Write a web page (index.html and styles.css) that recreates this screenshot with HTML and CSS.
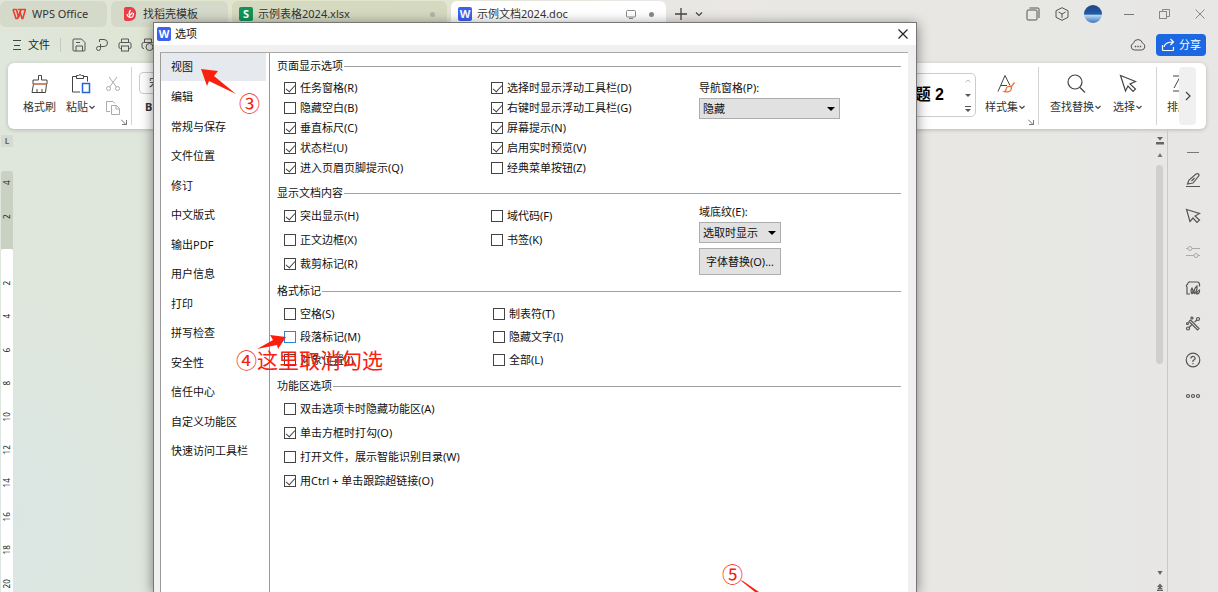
FILE: index.html
```html
<!DOCTYPE html>
<html lang="zh-CN">
<head>
<meta charset="utf-8">
<title>示例文档2024.doc - WPS Office</title>
<link rel="stylesheet" href="styles.css">
</head>
<body>
<div class="app">
  <header class="tabbar">
    <button class="tab tab-home"><svg class="i14" viewBox="0 0 14 14" fill="none" stroke-linejoin="round"><path d="M1 2.500h3.500l2 8L9 2.500" stroke="#e8402f" stroke-width="1.600"/><path d="M1 2.500l3 9h1.500L8 5l2 6.500h.8l2.600-9H6" stroke="#e8402f" stroke-width="1.600"/></svg>WPS Office</button>
    <button class="tab tab-docer"><svg class="i14" viewBox="0 0 14 14"><path d="M1 2Q1 0 3 0h5a6 6 0 0 1 5 7q0 7-7 7H3q-2 0-2-2z" fill="#ea3d45"/><path d="M4 7q.5 3.500 3.500 3.500T10.500 6M7 10q-2-4 .5-7M7 8l2.500-2.500" fill="none" stroke="#fff" stroke-width="1.200"/></svg>找稻壳模板</button>
    <button class="tab tab-sheet"><span class="badge badge-green">S</span>示例表格2024.xlsx<span class="tab-end"><i class="dot dot-light"></i></span></button>
    <button class="tab tab-doc"><span class="badge">W</span>示例文档2024.doc<span class="tab-end"><svg class="i12" viewBox="0 0 12 12" fill="none" stroke="#888"><rect x="1.500" y="2.500" width="9" height="6.500" rx="1"/><path d="M4 10.500h4"/></svg><i class="dot"></i></span></button>
    <button class="icon-btn plus" aria-label="新建"><svg class="i14" viewBox="0 0 14 14" stroke="#444" stroke-width="1.300"><path d="M1 7h12M7 1v12"/></svg></button>
    <button class="icon-btn" aria-label="标签列表"><svg class="i8" viewBox="0 0 8 8" fill="none" stroke="#444" stroke-width="1.200"><path d="M1 2.500l3 3 3-3"/></svg></button>
    <div class="window-tools">
      <button class="icon-btn" aria-label="窗口"><svg class="i14" viewBox="0 0 14 14" fill="none" stroke="#555"><rect x="1" y="3" width="10" height="10" rx="1"/><path d="M3.500 1H12q1 0 1 1v9"/></svg></button>
      <button class="icon-btn" aria-label="应用"><svg class="i14" viewBox="0 0 14 14" fill="none" stroke="#555"><path d="M7 .7l6 3v6.600l-6 3-6-3V3.700zM3.500 5L7 7l3.500-2M7 7v4"/></svg></button>
      <span class="avatar"></span>
      <button class="icon-btn minimize" aria-label="最小化"><svg class="i12" viewBox="0 0 12 12" stroke="#777"><path d="M1 6.500h10"/></svg></button>
      <button class="icon-btn" aria-label="还原"><svg class="i12" viewBox="0 0 12 12" fill="none" stroke="#888"><rect x=".5" y="3.500" width="7" height="7"/><path d="M3.500 3.500v-2h7v7h-3"/></svg></button>
      <button class="icon-btn" aria-label="关闭"><svg class="i12" viewBox="0 0 12 12" stroke="#888"><path d="M1.500 1.500l9 9M10.500 1.500l-9 9"/></svg></button>
    </div>
  </header>

  <div class="menubar">
    <button class="file-menu"><svg class="i10" viewBox="0 0 10 10" stroke="#444"><path d="M1 .5h8M2 5.500h6M1 9.500h8"/></svg>文件</button>
    <i class="rule"></i>
    <button class="icon-btn" aria-label="保存"><svg class="i14" viewBox="0 0 14 14" fill="none" stroke="#555"><path d="M1 2q0-1 1-1h7.500L13 4.500V12q0 1-1 1H2q-1 0-1-1zM4 13V8h6.500v5M4 4.500h4"/></svg></button>
    <button class="icon-btn" aria-label="输出"><svg class="i14" viewBox="0 0 14 14" fill="none" stroke="#555"><path d="M4.500 4V1.500H9a3.500 3.500 0 0 1 0 7H3.500a2 2 0 1 0 2 2V6"/></svg></button>
    <button class="icon-btn" aria-label="打印"><svg class="i14" viewBox="0 0 14 14" fill="none" stroke="#555"><path d="M3.500 4V1h7v3M3.500 10.500h-1Q1 10.500 1 9V6q0-1.500 1.500-1.500h9Q13 4.500 13 6v3q0 1.500-1.500 1.500h-1"/><rect x="3.500" y="8" width="7" height="5"/></svg></button>
    <button class="icon-btn" aria-label="打印预览"><svg class="i14" viewBox="0 0 14 14" fill="none" stroke="#555"><path d="M3.500 4V1h7v3M3 10.500Q1 10.500 1 9V6q0-1.500 1.500-1.500h9Q13 4.500 13 6"/><circle cx="8.500" cy="9" r="3.500"/></svg></button>
    <div class="menubar-end">
      <svg class="i16" viewBox="0 0 16 16" fill="none" stroke="#555"><path d="M4.500 13a3.500 3.500 0 0 1-1-6.800 4.600 4.600 0 0 1 9 0 3.500 3.500 0 0 1-1 6.800z"/><path d="M4.800 9.500h1.400M7.300 9.500h1.400M9.800 9.500h1.400" stroke-width="1.500"/></svg>
      <button class="share"><svg class="i14" viewBox="0 0 14 14" fill="none" stroke="#fff" stroke-width="1.200"><path d="M1.500 7v4.500q0 1 1 1h9q1 0 1-1V9M3 9q1-5 9-5M9.500 1l3 3-3 3"/></svg>分享</button>
    </div>
  </div>

  <div class="ribbon">
    <button class="tool tool-brush"><svg class="i22" viewBox="0 0 22 22" fill="none" stroke="#444"><path d="M9.500 7V2.500h3V7h5.500v4H4V7zM4.500 11L3 19.500h13.500L17.500 11M8 19.500V16M13 19.500V16"/><path d="M4 11h14" stroke="#e8743b"/></svg>格式刷</button>
    <button class="tool"><svg class="i22" viewBox="0 0 22 22" fill="none" stroke="#444"><path d="M6 3.500H2.500v15.500H10M14 3.500h3.500v5M6.500 5.500v-3h2q1.500-2 3 0h2v3z"/><path d="M12.500 10.500h7v9h-7z" stroke="#2763d8" stroke-width="1.500"/></svg><span>粘贴<svg class="caret" viewBox="0 0 8 8"><path d="M1.500 3L4 5.500 6.500 3"/></svg></span></button>
    <div class="small-tools">
      <button class="icon-btn" aria-label="剪切"><svg class="i16" viewBox="0 0 16 16" fill="none" stroke="#aaa"><circle cx="3.500" cy="12.500" r="2"/><circle cx="12.500" cy="12.500" r="2"/><path d="M4.500 11L12 1M11.500 11L4 1"/></svg></button>
      <button class="icon-btn" aria-label="复制"><svg class="i16" viewBox="0 0 16 16" fill="none" stroke="#aaa"><path d="M5 11.500H1.500V1.500H8l2 2"/><path d="M6.500 5.500h5l3 3v6h-8zM11 5.500V9h3.500"/></svg></button>
    </div>
    <i class="corner"><svg class="i6" viewBox="0 0 6 6" fill="none" stroke="#777"><path d="M0 .5l5 5M5.500 1v4.500H1"/></svg></i>
    <i class="rule"></i>
    <div class="font-group"><span class="font-name">宋体</span><button class="bold">B</button></div>
    <div class="gallery"><span class="gallery-item">标题 2</span><span class="spins"><svg viewBox="0 0 8 8" fill="none" stroke="#bbb"><path d="M1.500 5L4 3l2.500 2"/></svg><svg viewBox="0 0 8 8" fill="#555"><path d="M1 3h6L4 6z"/></svg><svg viewBox="0 0 8 8" fill="#555"><path d="M1 1h6v1H1zM1 4h6L4 7z"/></svg></span></div>
    <button class="tool tool-style"><svg class="i22" viewBox="0 0 22 22" fill="none" stroke="#444"><path d="M3 18.500L10 2.500l5 10M6 12.500h6"/><path d="M19.500 9.500L16 14M15.500 13.500q-4-1-4.500 3 0 1.500-1.500 2 7 1.500 7-4z" stroke="#e8743b" stroke-width="1.300"/></svg><span>样式集<svg class="caret" viewBox="0 0 8 8"><path d="M1.500 3L4 5.500 6.500 3"/></svg></span></button>
    <i class="corner"><svg class="i6" viewBox="0 0 6 6" fill="none" stroke="#777"><path d="M0 .5l5 5M5.500 1v4.500H1"/></svg></i>
    <i class="rule"></i>
    <button class="tool tool-find"><svg class="i22" viewBox="0 0 22 22" fill="none" stroke="#444" stroke-width="1.200"><circle cx="10" cy="9" r="7"/><path d="M15 14.500l5 5"/></svg><span>查找替换<svg class="caret" viewBox="0 0 8 8"><path d="M1.500 3L4 5.500 6.500 3"/></svg></span></button>
    <button class="tool"><svg class="i22" viewBox="0 0 22 22" fill="none" stroke="#444" stroke-width="1.200"><path d="M3.500 2.500l15 6-5.500 2.500 5.500 5-2.500 2.500-5-5.500L8.500 18z"/></svg><span>选择<svg class="caret" viewBox="0 0 8 8"><path d="M1.500 3L4 5.500 6.500 3"/></svg></span></button>
    <i class="rule rule-last"></i>
    <button class="tool tool-cut"><svg class="i22" viewBox="0 0 22 22" fill="none" stroke="#444"><path d="M6 3h14M6 18h14M7 15L13 4l5 11"/></svg>排版</button>
    <button class="ribbon-next" aria-label="更多"><svg class="i10" viewBox="0 0 10 10" fill="none" stroke="#444" stroke-width="1.200"><path d="M3 1l4 4-4 4"/></svg></button>
  </div>

  <main class="workspace">
    <div class="ruler">
      <span class="ruler-corner">L</span>
      <div class="ruler-margin"><span>4</span><span>2</span></div>
      <div class="ruler-page"><span>2</span><span>4</span><span>6</span><span>8</span><span>10</span><span>12</span><span>14</span><span>16</span><span>18</span><span>20</span></div>
    </div>
    <div class="canvas"></div>
    <div class="scroll">
      <svg class="i8" viewBox="0 0 8 8" fill="#666"><path d="M1 0h6L4 3.500zM0 5h8v2.500H0z"/></svg>
      <svg class="i8" viewBox="0 0 8 8" fill="#777"><path d="M1.500 6h5L4 2z"/></svg>
      <div class="track"><div class="thumb"></div></div>
      <svg class="i8" viewBox="0 0 8 8" fill="#666"><path d="M1.500 2h5L4 6z"/></svg>
      <svg class="i8" viewBox="0 0 8 8" fill="#666"><path d="M1 4l3-3.500L7 4zM1 6.500L4 3l3 3.500zM1 7h6v1H1z"/></svg>
    </div>
    <aside class="sidebar">
      <button class="icon-btn collapse" aria-label="收起"><svg class="i16" viewBox="0 0 16 16" stroke="#777"><path d="M2 8.500h12"/></svg></button>
      <button class="icon-btn" aria-label="编辑"><svg class="i16" viewBox="0 0 16 16" fill="none" stroke="#555" stroke-width="1.200"><path d="M1 14.500h14M2.500 12l1.500-4 7-6q3-1 3 1.500L8 11zM6.500 9l3-3"/></svg></button>
      <button class="icon-btn" aria-label="选择"><svg class="i16" viewBox="0 0 16 16" fill="none" stroke="#555" stroke-width="1.200"><path d="M1.500 1.500l13 4-4.500 2.500 4.500 4-2.500 2.500-4-4.500L5 13.500z"/></svg></button>
      <button class="icon-btn" aria-label="属性"><svg class="i16" viewBox="0 0 16 16" fill="none" stroke="#aaa"><path d="M1 4.500h2M7 4.500h8M1 11.500h8M13 11.500h2"/><circle cx="5" cy="4.500" r="2"/><circle cx="11" cy="11.500" r="2"/></svg></button>
      <button class="icon-btn" aria-label="素材"><svg class="i16" viewBox="0 0 16 16" fill="none" stroke="#555" stroke-width="1.200"><path d="M5 14H2V7Q.5 5 2.500 4.500 3 1.500 5.500 2H13q2 1 1.500 4.500M7 14q-2-3 0-6 2 3 0 6M9 14q-.5-5 3-8 .5 5-3 8M11 14q1-3 3.500-4 .5 4-3.500 4"/></svg></button>
      <button class="icon-btn" aria-label="工具"><svg class="i16" viewBox="0 0 16 16" fill="none" stroke="#555" stroke-width="1.200"><path d="M5.500 4L14 12.500 12.500 14 4 5.500zM4 11.500L6.500 9M9.500 6L12 4"/><circle cx="3" cy="12.500" r="1.500"/><circle cx="13" cy="3" r="1.500"/><circle cx="7" cy="2" r="1"/><circle cx="2.500" cy="7.500" r="1"/></svg></button>
      <button class="icon-btn" aria-label="帮助"><svg class="i16" viewBox="0 0 16 16" fill="none" stroke="#555" stroke-width="1.200"><circle cx="8" cy="8" r="6.800"/><path d="M5.800 6.500Q6 4.300 8 4.300t2.200 2Q10 7.500 8 8.500V10M8 11v1.300"/></svg></button>
      <button class="icon-btn" aria-label="更多"><svg class="i16" viewBox="0 0 16 16" fill="none" stroke="#555" stroke-width="1.200"><circle cx="3" cy="8" r="1.500"/><circle cx="8" cy="8" r="1.500"/><circle cx="13" cy="8" r="1.500"/></svg></button>
    </aside>
  </main>

  <div class="dialog" role="dialog" aria-label="选项">
    <div class="dialog-title"><span class="badge">W</span>选项<button class="icon-btn close" aria-label="关闭"><svg class="i10" viewBox="0 0 10 10" stroke="#222" stroke-width="1.200"><path d="M.5.5l9 9M9.500.5l-9 9"/></svg></button></div>
    <div class="dialog-body">
      <nav class="nav">
        <div class="nav-list">
          <button class="active">视图</button><button>编辑</button><button>常规与保存</button><button>文件位置</button><button>修订</button><button>中文版式</button><button>输出PDF</button><button>用户信息</button><button>打印</button><button>拼写检查</button><button>安全性</button><button>信任中心</button><button>自定义功能区</button><button>快速访问工具栏</button>
        </div>
      </nav>
      <div class="pane">
        <section>
          <h2>页面显示选项</h2>
          <div class="options tight">
            <div class="col">
              <label><input type="checkbox" checked>任务窗格(R)</label>
              <label><input type="checkbox">隐藏空白(B)</label>
              <label><input type="checkbox" checked>垂直标尺(C)</label>
              <label><input type="checkbox" checked>状态栏(U)</label>
              <label><input type="checkbox" checked>进入页眉页脚提示(Q)</label>
            </div>
            <div class="col">
              <label><input type="checkbox" checked>选择时显示浮动工具栏(D)</label>
              <label><input type="checkbox" checked>右键时显示浮动工具栏(G)</label>
              <label><input type="checkbox" checked>屏幕提示(N)</label>
              <label><input type="checkbox" checked>启用实时预览(V)</label>
              <label><input type="checkbox">经典菜单按钮(Z)</label>
            </div>
            <div class="field">
              <label for="nav-pane">导航窗格(P):</label>
              <select id="nav-pane" class="wide"><option>隐藏</option></select>
            </div>
          </div>
        </section>
        <section>
          <h2>显示文档内容</h2>
          <div class="options">
            <div class="col">
              <label><input type="checkbox" checked>突出显示(H)</label>
              <label><input type="checkbox">正文边框(X)</label>
              <label><input type="checkbox" checked>裁剪标记(R)</label>
            </div>
            <div class="col">
              <label><input type="checkbox">域代码(F)</label>
              <label><input type="checkbox">书签(K)</label>
            </div>
            <div class="field">
              <label for="shade">域底纹(E):</label>
              <select id="shade"><option>选取时显示</option></select>
              <button class="push">字体替换(O)...</button>
            </div>
          </div>
        </section>
        <section>
          <h2>格式标记</h2>
          <div class="options marks">
            <div class="col">
              <label><input type="checkbox">空格(S)</label>
              <label><input type="checkbox" class="hot">段落标记(M)</label>
              <label><input type="checkbox">对象位置(J)</label>
            </div>
            <div class="col">
              <label><input type="checkbox">制表符(T)</label>
              <label><input type="checkbox">隐藏文字(I)</label>
              <label><input type="checkbox">全部(L)</label>
            </div>
          </div>
        </section>
        <section>
          <h2>功能区选项</h2>
          <div class="options single">
            <div class="col">
              <label><input type="checkbox">双击选项卡时隐藏功能区(A)</label>
              <label><input type="checkbox" checked>单击方框时打勾(O)</label>
              <label><input type="checkbox">打开文件，展示智能识别目录(W)</label>
              <label><input type="checkbox" checked>用Ctrl + 单击跟踪超链接(O)</label>
            </div>
          </div>
        </section>
      </div>
    </div>
  </div>

  <div class="notes">
    <svg class="arrows" width="1218" height="592" viewBox="0 0 1218 592" fill="#f9200f"><path d="M201 69l17 2-4 5 22 18-27-13-2 5z"/><path d="M286 337l-16-2 3 5-16 9 20-4 1 4z"/><path d="M740 580l3 1 16 11h-4z"/></svg>
    <span class="note note-3">③</span>
    <span class="note note-4">④这里取消勾选</span>
    <span class="note note-5">⑤</span>
  </div>
</div>
</body>
</html>
```
FILE: styles.css
```css
* { box-sizing: border-box; }
body {
  margin: 0;
  font: 11px/16px "Noto Sans", "Noto Sans CJK SC", sans-serif;
  color: #222;
}
button, select, input { font: inherit; color: inherit; margin: 0; }
button { border: 0; padding: 0; background: none; white-space: nowrap; }
svg { display: block; flex: none; }
.i6 { width: 6px; height: 6px; }
.i8 { width: 8px; height: 8px; }
.i10 { width: 10px; height: 10px; }
.i12 { width: 12px; height: 12px; }
.i14 { width: 14px; height: 14px; }
.i16 { width: 16px; height: 16px; }
.i22 { width: 22px; height: 22px; }
.app {
  position: relative;
  height: 100vh;
  overflow: hidden;
  display: flex;
  flex-direction: column;
  background:
    radial-gradient(ellipse 340px 90px at 300px 0, #e1e5c9, transparent),
    radial-gradient(ellipse 200px 260px at 0 520px, #dbe6e5, transparent),
    linear-gradient(90deg, #dfe6db, #e0e6dc 14%, #eae7e4 60%, #e7e7e5 92%, #e9e6e6);
}
.icon-btn { display: flex; align-items: center; justify-content: center; }

/* tabs */
.tabbar { display: flex; align-items: center; height: 28px; flex: none; padding-right: 12px; }
.tab {
  display: flex;
  align-items: center;
  gap: 6px;
  height: 26px;
  padding: 0 12px;
  margin-right: 4px;
  border-radius: 6px;
  background: #d5d9ca;
  color: #333;
}
.tab-home { width: 107px; }
.tab-docer { width: 117px; }
.tab-sheet { width: 215px; padding-left: 7px; background: #d5d9c0; }
.tab-doc { width: 215px; padding-left: 7px; background: #fff; }
.tab-sheet, .tab-doc { gap: 5px; }
.tab-end { display: flex; align-items: center; gap: 12px; margin-left: auto; }
.dot { width: 5px; height: 5px; border-radius: 50%; background: #888; }
.dot-light { background: #b2b6a5; }
.badge {
  display: inline-flex;
  align-items: center;
  justify-content: center;
  width: 14px;
  height: 14px;
  border-radius: 2px;
  background: #3b62ee;
  color: #fff;
  font-weight: 700;
  line-height: 14px;
}
.badge-green { background: #11945a; }
.plus { margin: 0 7px 0 4px; }
.window-tools { display: flex; align-items: center; gap: 15px; margin-left: auto; }
.avatar { width: 18px; height: 18px; border-radius: 50%; background: linear-gradient(#1d4486, #245ca5 50%, #b5d5f0 58%, #3778bc); }
.minimize { margin: 0 9px 0 6px; }
.window-tools .icon-btn:last-child { margin-left: 8px; }

/* menu */
.menubar { display: flex; align-items: center; height: 35px; flex: none; padding: 0 12px 2px; }
.file-menu { display: flex; align-items: center; gap: 6px; }
.rule { width: 1px; background: #d4d4d4; }
.menubar .rule { height: 14px; margin: 0 11px 0 10px; background: #c4cabc; }
.menubar .icon-btn { margin-right: 9px; }
.menubar-end { display: flex; align-items: center; gap: 10px; margin-left: auto; }
.share {
  display: flex;
  align-items: center;
  gap: 4px;
  height: 22px;
  padding: 0 5px;
  border-radius: 4px;
  background: #1c68e3;
  color: #fff;
}

/* ribbon */
.ribbon {
  display: flex;
  flex: none;
  height: 66px;
  margin: 0 12px 0 8px;
  padding: 4px 10px 4px 15px;
  border-radius: 6px;
  background: #fff;
  box-shadow: 0 1px 4px #0003;
}
.tool { display: flex; flex-direction: column; align-items: center; gap: 4px; padding-top: 6px; color: #333; line-height: 16px; }
.tool span { display: flex; align-items: center; }
.tool-brush { margin-right: 10px; }
.caret { width: 8px; height: 8px; fill: none; stroke: #444; stroke-width: 1.2; }
.small-tools { display: flex; flex-direction: column; justify-content: center; gap: 8px; margin-left: 9px; }
.corner { align-self: flex-end; }
.ribbon .rule { margin: 0 7px 0 4px; }
.font-group { width: 90px; padding-top: 5px; color: #333; }
.font-name { display: block; height: 22px; padding: 2px 9px; border: 1px solid #ccc; border-radius: 4px; }
.bold { margin: 5px 0 0 6px; font-weight: 700; }
.gallery {
  display: flex;
  align-items: center;
  justify-content: flex-end;
  gap: 20px;
  width: 140px;
  height: 44px;
  margin: 6px 9px 0 auto;
  padding-right: 3px;
  border: 1px solid #ccc;
  border-radius: 5px;
}
.gallery-item { font: 700 16px/20px "Liberation Sans", "Noto Sans CJK SC", sans-serif; color: #000; word-spacing: normal; }
.spins { display: flex; flex-direction: column; gap: 6px; }
.spins svg { width: 8px; height: 8px; }
.tool-style { margin-right: 2px; }
.tool-find { margin: 0 11px 0 4px; }
.ribbon .rule-last { margin: 0 10px 0 13px; }
.tool-cut { width: 12px; overflow: hidden; align-items: flex-start; }
.ribbon-next {
  display: flex;
  align-items: center;
  justify-content: center;
  width: 17px;
  border-radius: 4px;
  background: #f0f0f0;
}

/* workspace */
.workspace { display: flex; flex: 1; min-height: 0; }
.ruler { display: flex; flex-direction: column; width: 13px; padding: 6px 0 0 1px; font-size: 8px; line-height: 12px; overflow: hidden; }
.ruler span { writing-mode: vertical-rl; transform: rotate(180deg); text-align: center; }
.ruler .ruler-corner { height: 12px; margin-bottom: 24px; writing-mode: horizontal-tb; transform: none; font-weight: 700; color: #666; background: #d6dbcf; }
.ruler-margin { display: flex; flex: none; flex-direction: column; gap: 10px; height: 78px; border-radius: 3px 3px 0 0; background: #cbd1c2; }
.ruler-margin span { height: 24px; }
.ruler-page { display: grid; flex: none; grid-template-rows: repeat(10, 1fr); height: 351px; padding-top: 17px; border-radius: 3px 3px 0 0; background: #fff; }
.canvas { flex: 1; }
.scroll { display: flex; flex-direction: column; align-items: center; gap: 6px; width: 16px; padding: 8px 0 1px; border-right: 1px solid #c9c9c8; }
.track { flex: 1; width: 7px; }
.thumb { height: 50%; border-radius: 4px; background: #cfd0ce; }
.sidebar { display: flex; flex-direction: column; width: 50px; padding-top: 13px; }
.sidebar .icon-btn { height: 36px; }
.sidebar .collapse { height: 20px; }

/* dialog */
.dialog {
  position: absolute;
  inset: 22px 301px 0 153px;
  display: flex;
  flex-direction: column;
  border: 1px solid #777;
  border-bottom: 0;
  background: #f0f0f0;
  box-shadow: 0 2px 12px #0007;
  color: #111;
}
.dialog-title { display: flex; align-items: center; gap: 4px; height: 22px; flex: none; padding: 0 8px 0 3px; background: #fff; }
.close { margin-left: auto; }
.dialog-body { display: flex; flex: 1; min-height: 0; margin: 7px 8px 0 6px; border-top: 1px solid #aaa; }
.nav { width: 110px; flex: none; border: solid #999; border-width: 0 1px; background: #fff; }
.nav-list { display: grid; grid-template-rows: repeat(14, 1fr); height: 413px; }
.nav button { margin-right: 3px; padding-left: 10px; text-align: left; }
.nav .active { margin-bottom: 2px; background: #e6eaef; }
.pane { flex: 1; padding: 5px 7px 0; background: #fff; }
section + section { margin-top: 7px; }
h2 { display: flex; align-items: center; gap: 1px; margin: 0 0 3px; font: inherit; }
h2::after { content: ""; flex: 1; height: 1px; background: #a0a0a0; }
.options { display: grid; grid-template-columns: 207px 208px 1fr; margin-left: 7px; }
.options.tight { margin-top: 4px; }
.options.marks { grid-template-columns: 209px 1fr; }
.options.single { grid-template-columns: 1fr; }
.col { display: flex; flex-direction: column; }
.col label { display: flex; align-items: center; gap: 4px; height: 24px; }
.tight .col label { height: 20px; }
.marks .col label { height: 23px; }
input[type="checkbox"] {
  appearance: none;
  width: 12px;
  height: 12px;
  border: 1px solid #444;
  background: #fff;
}
input[type="checkbox"]:checked::after {
  content: "";
  display: block;
  width: 8px;
  height: 4px;
  margin: 2px 0 0 1px;
  border: solid #444;
  border-width: 0 0 1px 1px;
  transform: rotate(-48deg);
}
input.hot { border-color: #2a86d8; }
.field { display: flex; flex-direction: column; align-items: flex-start; height: 71px; margin-bottom: 1px; }
.tight .field { height: auto; padding-top: 2px; }
select {
  appearance: none;
  width: 82px;
  height: 21px;
  flex: none;
  margin-top: 2px;
  padding: 0 3px;
  border: 1px solid #adadad;
  border-radius: 0;
  background: #e1e1e1 url("data:image/svg+xml,%3Csvg xmlns='http://www.w3.org/2000/svg' width='8' height='4'%3E%3Cpath d='M0 0h8L4 4z'/%3E%3C/svg%3E") right 4px center no-repeat;
}
select.wide { width: 141px; }
.push { width: 82px; height: 27px; flex: none; margin-top: 5px; border: 1px solid #adadad; background: #e1e1e1; }

/* tutorial marks drawn over the window */
.notes { position: absolute; inset: 0; pointer-events: none; color: #f9200f; }
.arrows { position: absolute; left: 0; top: 0; }
.note { position: absolute; font: 21px/24px "Noto Sans CJK SC", sans-serif; white-space: nowrap; }
.note-3 { left: 239px; top: 90px; }
.note-4 { left: 236px; top: 347px; }
.note-5 { left: 722px; top: 561px; }
```
